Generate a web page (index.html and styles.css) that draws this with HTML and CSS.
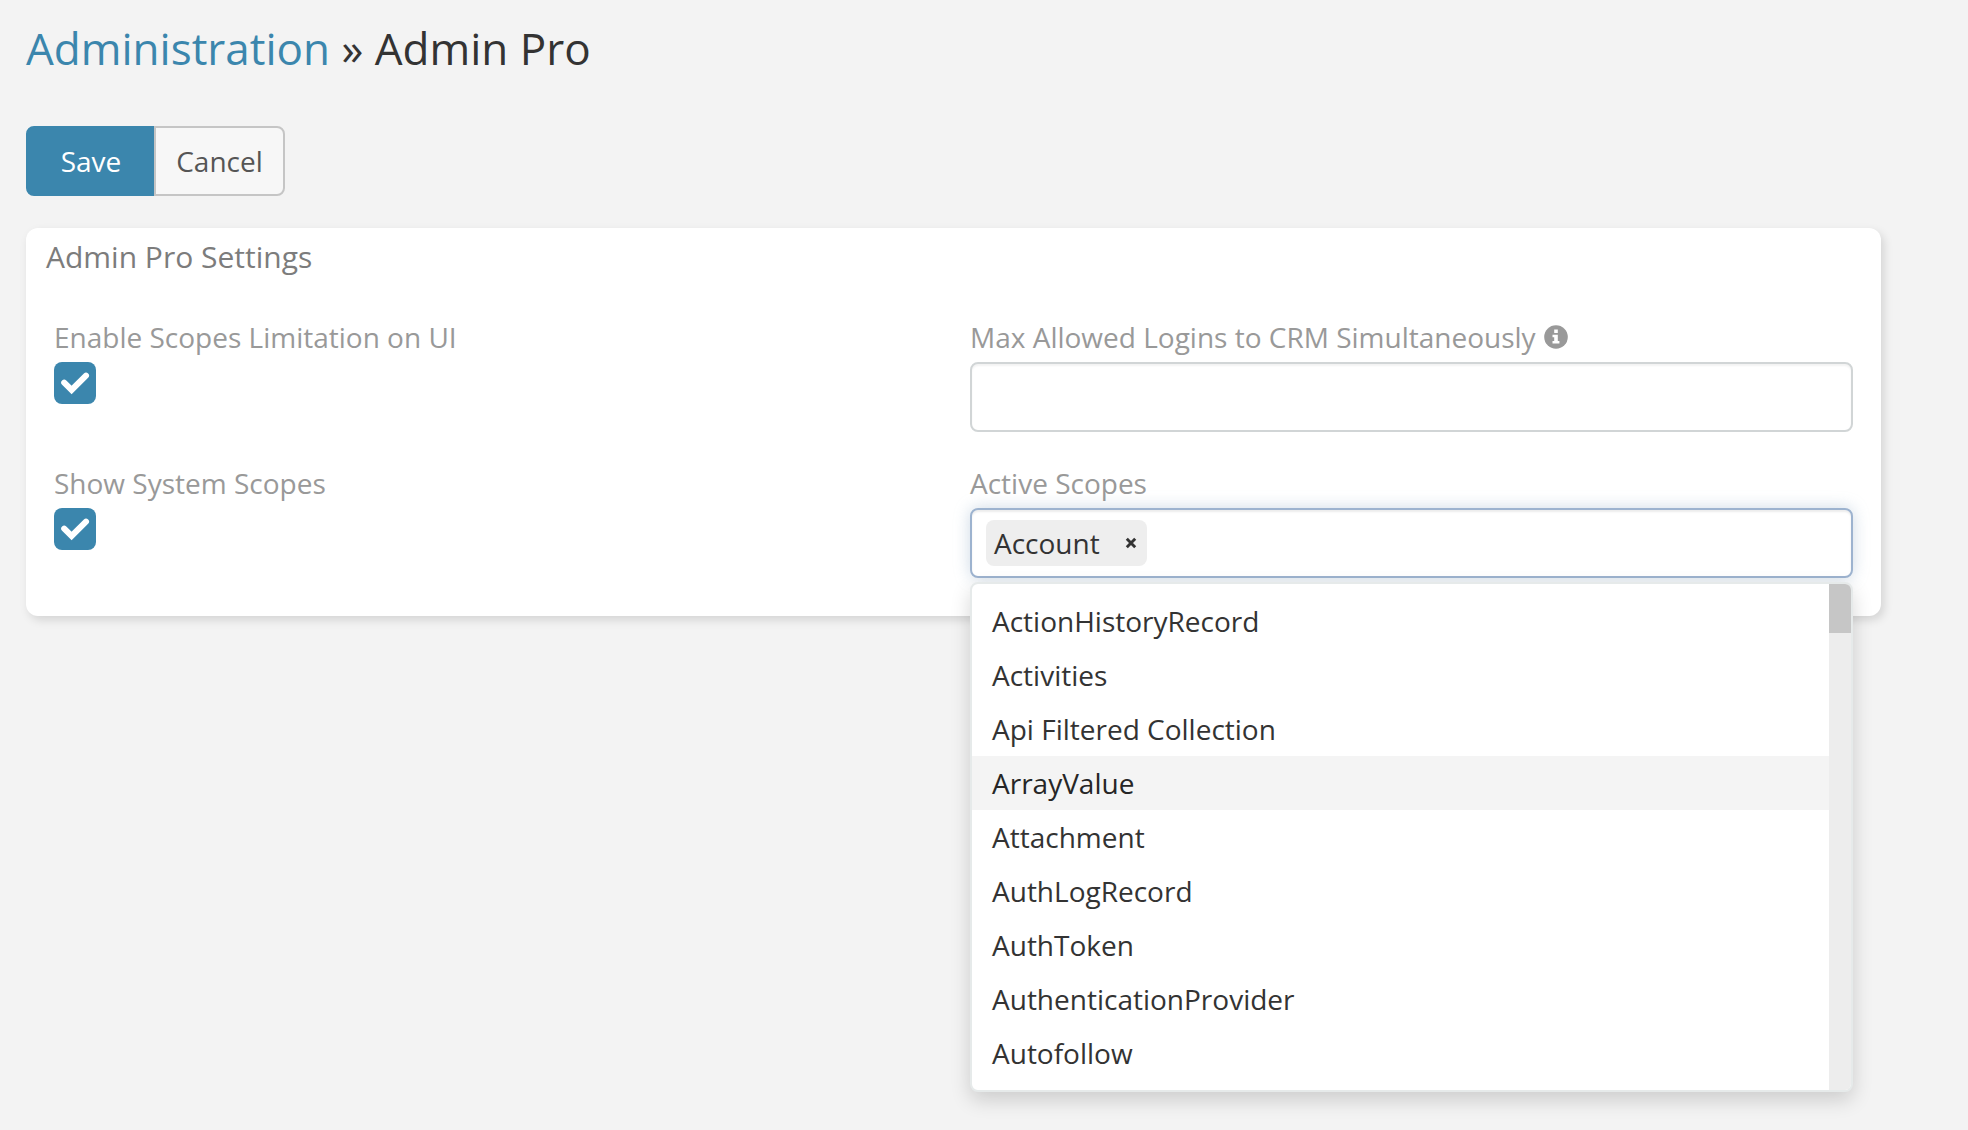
FILE: index.html
```html
<!DOCTYPE html>
<html lang="en">
<head>
<meta charset="utf-8">
<title>Admin Pro</title>
<link rel="stylesheet" href="styles.css">
</head>
<body>
<main class="page">
  <h1 class="page-title"><a class="crumb" href="#">Administration</a> » Admin Pro</h1>
  <div class="button-group">
    <button class="btn btn-primary" type="button">Save</button>
    <button class="btn btn-default" type="button">Cancel</button>
  </div>
  <section class="panel">
    <h2 class="panel-title">Admin Pro Settings</h2>
    <div class="fields">
      <div class="cell">
        <div class="label">Enable Scopes Limitation on UI</div>
        <span class="checkbox"><svg width="42" height="42" viewBox="0 0 42 42"><path d="M10.2 20.7 17.6 28 32 13.7"/></svg></span>
      </div>
      <div class="cell">
        <div class="label">Max Allowed Logins to CRM Simultaneously
          <svg class="info" width="24" height="24" viewBox="0 0 24 24"><circle cx="12" cy="12" r="11.8"/><path d="M10.2 4.6h3.6v3.3h-3.6zM8.5 9.8h5.3v6.2h1.6v2.4H8.5V16h1.7v-3.8H8.5z"/></svg>
        </div>
        <div class="input"></div>
      </div>
      <div class="cell">
        <div class="label">Show System Scopes</div>
        <span class="checkbox"><svg width="42" height="42" viewBox="0 0 42 42"><path d="M10.2 20.7 17.6 28 32 13.7"/></svg></span>
      </div>
      <div class="cell">
        <div class="label">Active Scopes</div>
        <div class="input focused">
          <span class="chip">Account<svg width="12" height="12" viewBox="0 0 12 12"><path d="M1.8 1.8 10.2 10.2M10.2 1.8 1.8 10.2"/></svg></span>
        </div>
        <div class="dropdown">
          <ul class="options">
            <li>ActionHistoryRecord</li>
            <li>Activities</li>
            <li>Api Filtered Collection</li>
            <li class="active">ArrayValue</li>
            <li>Attachment</li>
            <li>AuthLogRecord</li>
            <li>AuthToken</li>
            <li>AuthenticationProvider</li>
            <li>Autofollow</li>
          </ul>
          <div class="scrollbar"><div class="thumb"></div></div>
        </div>
      </div>
    </div>
  </section>
</main>
</body>
</html>
```
FILE: styles.css
```css
* { box-sizing: border-box; }
body {
  margin: 0;
  background: #f3f3f3;
  color: #333;
  font: 28px/40px "Open Sans", sans-serif;
}
.page {
  height: 1130px;
  padding: 18px 87px 0 26px;
  overflow: hidden;
}
.page-title {
  margin: 0;
  font-size: 44px;
  line-height: 60px;
  font-weight: 400;
}
.crumb { color: #3b86ad; text-decoration: none; }
.button-group { display: flex; margin-top: 48px; }
.btn {
  height: 70px;
  padding: 0;
  border: 2px solid #c5c5c5;
  font: inherit;
}
.btn-primary {
  width: 128px;
  padding-left: 2px;
  border-color: #3b86ad;
  border-radius: 8px 0 0 8px;
  background: #3b86ad;
  color: #fff;
}
.btn-default {
  width: 131px;
  border-radius: 0 8px 8px 0;
  background: #f7f7f7;
  color: #555;
}
.panel {
  height: 388px;
  margin-top: 32px;
  padding: 8px 28px 0;
  border-radius: 12px;
  background: #fff;
  box-shadow: 3px 4px 10px rgba(0, 0, 0, .13);
}
.panel-title {
  margin: 0 -8px;
  font-size: 30px;
  line-height: 42px;
  font-weight: 400;
  color: #7c7c7c;
}
.fields {
  display: grid;
  grid-template-columns: 883px 883px;
  column-gap: 33px;
  grid-auto-rows: 146px;
  margin-top: 39px;
}
.cell { position: relative; }
.label { height: 45px; color: #999; white-space: nowrap; }
.info { margin-left: 1px; vertical-align: -1px; fill: #999; }
.info path { fill: #fff; }
.checkbox {
  display: block;
  width: 42px;
  height: 42px;
  border-radius: 8px;
  background: #3b86ad;
}
.checkbox svg { display: block; fill: none; stroke: #fff; stroke-width: 6; stroke-linecap: round; }
.input {
  display: flex;
  height: 70px;
  padding: 10px 14px;
  border: 2px solid #d1d5d6;
  border-radius: 8px;
  background: #fff;
  box-shadow: inset 0 2px 2px rgba(0, 0, 0, .05);
}
.focused {
  border-color: #9db3cf;
  box-shadow: inset 0 2px 2px rgba(0, 0, 0, .075), 0 0 16px rgba(130, 160, 190, .4);
}
.chip {
  display: flex;
  align-items: center;
  gap: 25px;
  height: 46px;
  padding: 0 10px 0 8px;
  border-radius: 8px;
  background: #eee;
}
.chip svg { fill: none; stroke: #333; stroke-width: 2.9; }
.dropdown {
  position: absolute;
  top: 119px;
  left: 0;
  display: flex;
  width: 883px;
  height: 510px;
  border: 2px solid #e6eaea;
  border-radius: 8px;
  background: #fff;
  box-shadow: 0 8px 20px rgba(0, 0, 0, .16);
  overflow: hidden;
}
.options {
  flex: 1;
  margin: 0;
  padding: 10px 0;
  list-style: none;
}
.options li { height: 54px; padding: 7px 20px; }
.options .active { background: #f4f4f4; color: #262626; }
.scrollbar { width: 22px; background: #ededed; }
.thumb { height: 49px; background: #c6c6c6; }
```
